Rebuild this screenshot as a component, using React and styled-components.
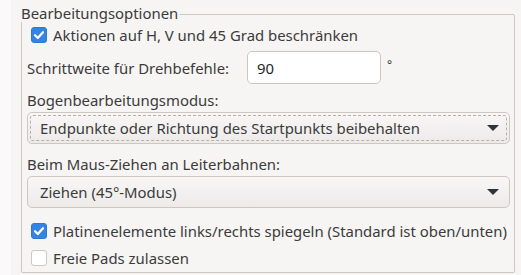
import React from "react";
import styled, { createGlobalStyle } from "styled-components";

const GlobalStyle = createGlobalStyle`
  body {
    margin: 0;
    background: #f6f5f4;
    font-family: "Noto Sans", "Open Sans", sans-serif;
    font-size: 14.9px;
    color: #3b3b3b;
  }
`;

const Page = styled.div`
  display: flex;
  width: 521px;
  height: 275px;
  overflow: hidden;
`;

const SideStrip = styled.div`
  width: 11px;
  background: #fafafa;
`;

const Content = styled.div`
  flex: 1;
  padding: 14px 6px 0 10px;
`;

const GroupBox = styled.div`
  position: relative;
  border: 1px solid #cdc7c2;
  border-radius: 2px;
  display: flex;
  flex-direction: column;
  padding: 10px 4px 4px 5px;
`;

const GroupTitle = styled.div`
  position: absolute;
  top: -11px;
  left: -1px;
  padding-right: 2px;
  line-height: 18px;
  background: #f6f5f4;
`;

const CheckRow = styled.label`
  display: flex;
  align-items: center;
  gap: 6px;
  height: 20px;
  padding-left: 4px;
  white-space: nowrap;
  margin-top: ${(p) => p.$top || 0}px;
`;

const Box = styled.span`
  flex: none;
  width: 16px;
  height: 16px;
  box-sizing: border-box;
  border-radius: 3px;
  display: flex;
  align-items: center;
  justify-content: center;
  background: ${(p) => (p.$checked ? "#3584e4" : "#ffffff")};
  border: 1px solid ${(p) => (p.$checked ? "#2f78d1" : "#cdc7c2")};
`;

const SpinRow = styled.div`
  display: flex;
  align-items: center;
  margin-top: 6px;
`;

const FieldLabel = styled.div`
  width: 220px;
`;

const NumberInput = styled.div`
  width: 134px;
  height: 33px;
  box-sizing: border-box;
  border: 1px solid #cdc7c2;
  border-radius: 5px;
  background: #ffffff;
  color: #1f1f1f;
  display: flex;
  align-items: center;
  padding-left: 9px;
`;

const Unit = styled.span`
  margin-left: 6px;
  font-size: 12px;
  margin-top: -6px;
`;

const SectionLabel = styled.div`
  line-height: 20px;
  margin-top: ${(p) => p.$top || 0}px;
`;

const Combo = styled.div`
  height: 32px;
  box-sizing: border-box;
  margin-top: 2px;
  border: 1px solid #cdc7c2;
  border-radius: 5px;
  background: linear-gradient(#f8f7f6, #edebe9);
  display: flex;
  align-items: center;
  padding: 0 10px 0 12px;
  position: relative;
  &::after {
    content: "";
    display: ${(p) => (p.$focused ? "block" : "none")};
    position: absolute;
    inset: 2px;
    border: 1px dashed #b5b0ab;
    border-radius: 3px;
  }
`;

const ComboText = styled.span`
  flex: 1;
  white-space: nowrap;
`;

const Arrow = styled.span`
  width: 0;
  height: 0;
  border-left: 6px solid transparent;
  border-right: 6px solid transparent;
  border-top: 6px solid #2e3436;
`;

function Check({ checked }) {
  return (
    <Box $checked={checked}>
      {checked && (
        <svg width="12" height="12" viewBox="0 0 12 12">
          <path
            d="M2 6.2 L4.8 9 L10 3.2"
            fill="none"
            stroke="#fff"
            strokeWidth="2.2"
            strokeLinecap="round"
            strokeLinejoin="round"
          />
        </svg>
      )}
    </Box>
  );
}

export default function App() {
  return (
    <>
      <GlobalStyle />
      <Page>
        <SideStrip />
        <Content>
          <GroupBox>
            <GroupTitle>Bearbeitungsoptionen</GroupTitle>
            <CheckRow>
              <Check checked />
              Aktionen auf H, V und 45 Grad beschränken
            </CheckRow>
            <SpinRow>
              <FieldLabel>Schrittweite für Drehbefehle:</FieldLabel>
              <NumberInput>90</NumberInput>
              <Unit>°</Unit>
            </SpinRow>
            <SectionLabel $top={6}>Bogenbearbeitungsmodus:</SectionLabel>
            <Combo $focused>
              <ComboText>Endpunkte oder Richtung des Startpunkts beibehalten</ComboText>
              <Arrow />
            </Combo>
            <SectionLabel $top={10}>Beim Maus-Ziehen an Leiterbahnen:</SectionLabel>
            <Combo>
              <ComboText>Ziehen (45°-Modus)</ComboText>
              <Arrow />
            </Combo>
            <CheckRow $top={13}>
              <Check checked />
              Platinenelemente links/rechts spiegeln (Standard ist oben/unten)
            </CheckRow>
            <CheckRow $top={7}>
              <Check />
              Freie Pads zulassen
            </CheckRow>
          </GroupBox>
        </Content>
      </Page>
    </>
  );
}
